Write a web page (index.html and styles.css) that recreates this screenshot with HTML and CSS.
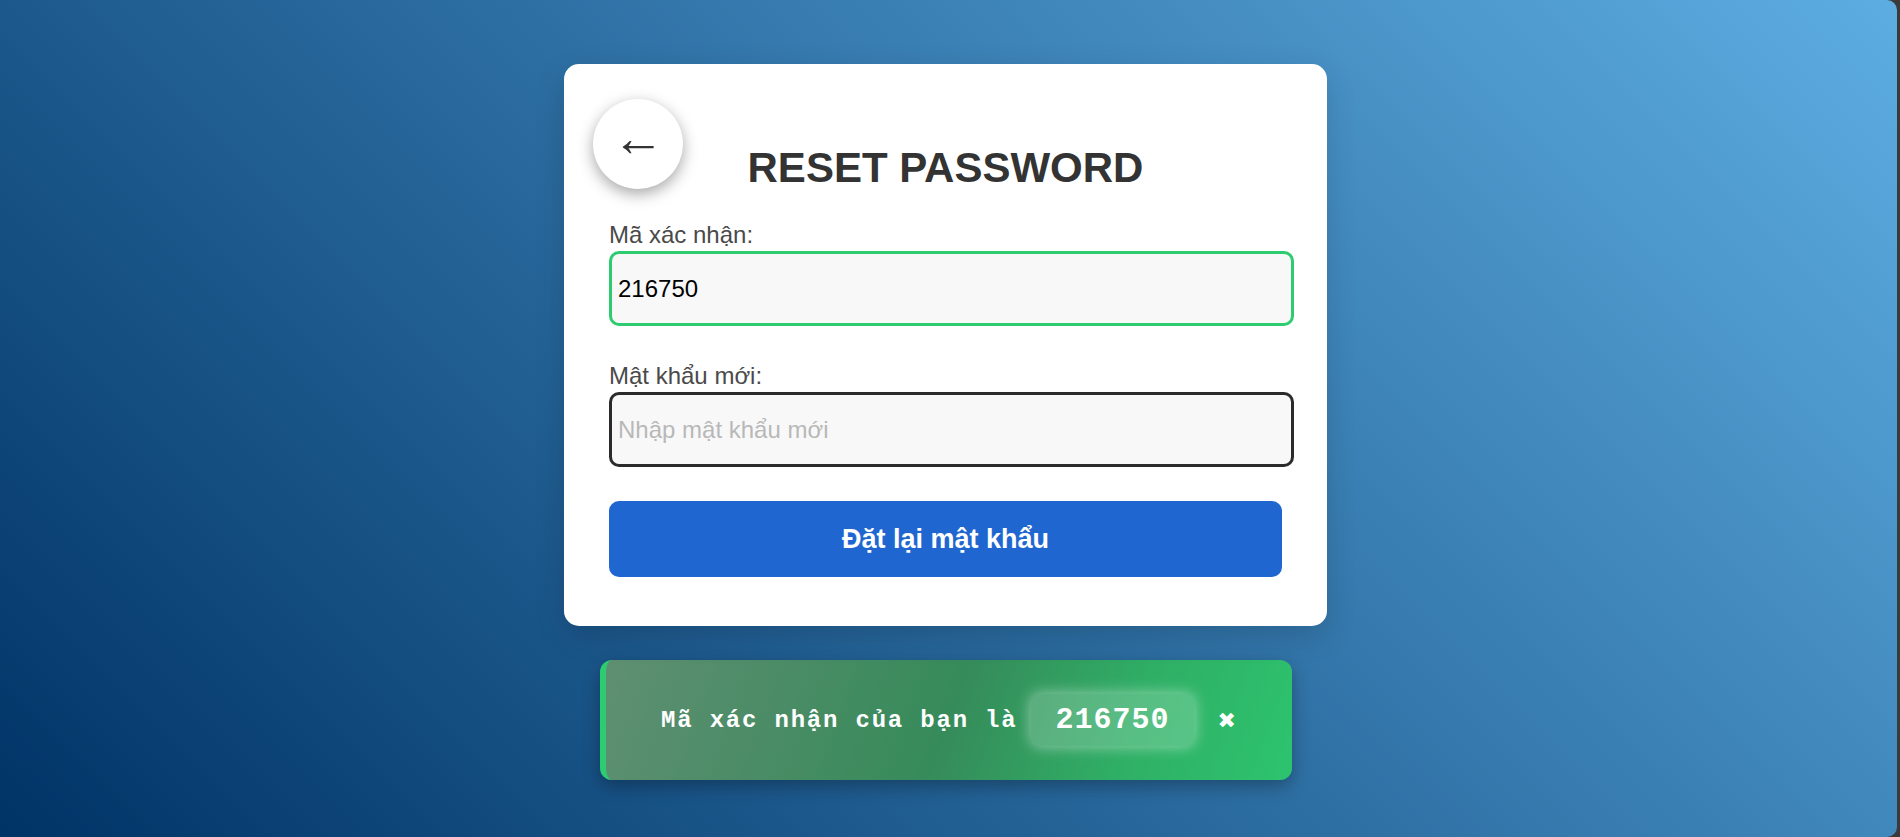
FILE: index.html
```html
<!DOCTYPE html>
<html lang="vi">
<head>
<meta charset="utf-8">
<title>Reset Password</title>
<link rel="stylesheet" href="styles.css">
</head>
<body>
<main class="page">
  <section class="card">
    <button class="back-btn" type="button">←</button>
    <h2 class="title">RESET PASSWORD</h2>
    <form class="form">
      <label class="label" for="code">Mã xác nhận:</label>
      <input class="input input-valid" id="code" type="text" value="216750">
      <label class="label label-second" for="pwd">Mật khẩu mới:</label>
      <input class="input input-focus" id="pwd" type="password" placeholder="Nhập mật khẩu mới">
      <button class="submit-btn" type="button">Đặt lại mật khẩu</button>
    </form>
  </section>
  <div class="toast">
    <span class="toast-text">Mã xác nhận của bạn là</span>
    <span class="toast-code">216750</span>
    <span class="toast-close">✖</span>
  </div>
</main>
</body>
</html>
```
FILE: styles.css
```css
html {
  margin: 0;
  background: #3a3a3a;
}
body {
  margin: 0;
  width: 1897px;
  height: 837px;
  overflow: hidden;
  border-radius: 0 10px 10px 0;
  background: linear-gradient(45deg, #003366 0%, #5dade2 100%);
  font-family: "Liberation Sans", Arial, sans-serif;
}
.page {
  display: flex;
  flex-direction: column;
  align-items: center;
  padding: 64px 6px 0 0;
}
.card {
  position: relative;
  box-sizing: border-box;
  width: 763px;
  padding: 80px 45px 49px;
  background: #ffffff;
  border-radius: 15px;
  box-shadow: 0 10px 30px rgba(0, 0, 0, 0.15);
}
.back-btn {
  position: absolute;
  left: 29px;
  top: 35px;
  width: 90px;
  height: 90px;
  border: none;
  border-radius: 50%;
  background: #ffffff;
  box-shadow: 0 5px 15px rgba(0, 0, 0, 0.35);
  color: #333333;
  font-family: "Liberation Sans", Arial, sans-serif;
  font-size: 52px;
  line-height: 1;
  padding: 0 0 12px;
  cursor: pointer;
}
.title {
  margin: 0;
  text-align: center;
  font-size: 42px;
  line-height: 48px;
  font-weight: bold;
  color: #333333;
}
.form {
  display: flex;
  flex-direction: column;
  margin-top: 29px;
}
.label {
  font-size: 24px;
  line-height: 28px;
  color: #4a4a4a;
  margin-bottom: 2px;
}
.label-second {
  margin-top: 36px;
}
.input {
  box-sizing: border-box;
  width: calc(100% + 12px);
  height: 75px;
  padding: 0 6px;
  border: 3px solid #333333;
  border-radius: 10px;
  background: #f8f8f8;
  font-family: "Liberation Sans", Arial, sans-serif;
  font-size: 24px;
  color: #000000;
  outline: none;
}
.input::placeholder {
  color: #b8b8b8;
}
.input-valid {
  border-color: #2ecc71;
}
.input-focus {
  border-color: #2b2b2b;
}
.submit-btn {
  margin-top: 34px;
  height: 76px;
  border: none;
  border-radius: 10px;
  background: #1f66d1;
  color: #ffffff;
  font-family: "Liberation Sans", Arial, sans-serif;
  font-size: 27px;
  font-weight: bold;
  cursor: pointer;
}
.toast {
  box-sizing: border-box;
  margin-top: 34px;
  width: 692px;
  height: 120px;
  display: flex;
  align-items: center;
  justify-content: center;
  gap: 14px;
  border-left: 6px solid #2ecc71;
  border-radius: 12px;
  background: linear-gradient(110deg, #5f8f72 0%, #4b8c66 25%, #368b5a 50%, #2fae65 75%, #2dc46e 100%);
  box-shadow: 0 6px 18px rgba(0, 0, 0, 0.3);
  color: #ffffff;
  font-family: "Courier New", "Liberation Mono", monospace;
  font-weight: bold;
}
.toast-text {
  font-size: 24px;
  letter-spacing: 1.8px;
}
.toast-code {
  padding: 0 24px;
  height: 52px;
  display: flex;
  align-items: center;
  border-radius: 8px;
  background: rgba(255, 255, 255, 0.2);
  box-shadow: 0 0 15px rgba(255, 255, 255, 0.5);
  font-size: 30px;
  letter-spacing: 1px;
}
.toast-close {
  margin-left: 10px;
  font-family: "DejaVu Sans", sans-serif;
  font-size: 22px;
}
```
